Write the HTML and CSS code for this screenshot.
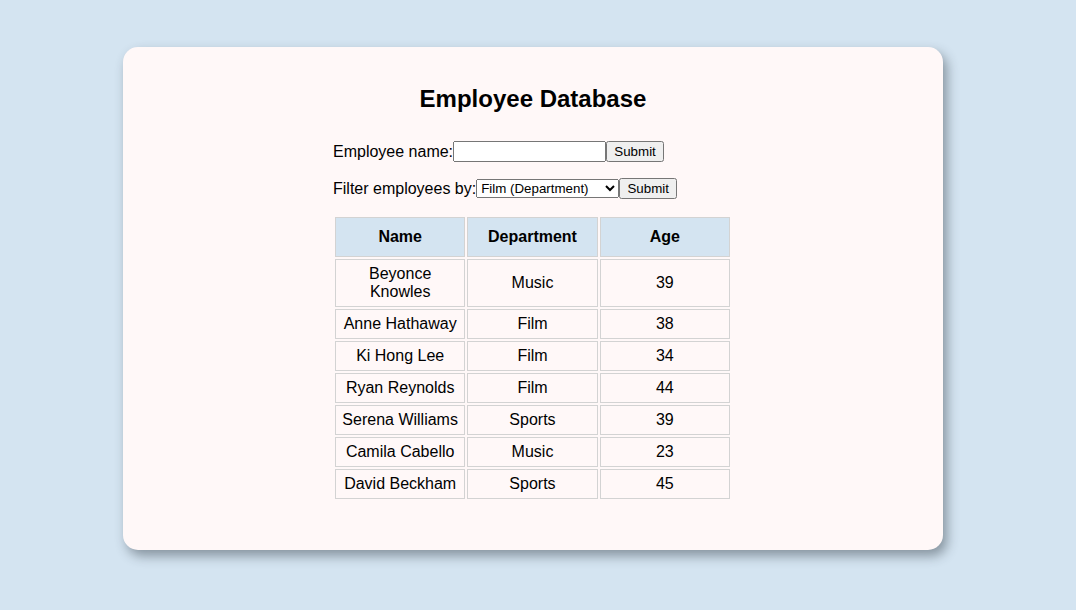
FILE: index.html
```html
<!DOCTYPE html>
<html lang="en">
  <head>
    <meta charset="utf-8">
    <title>Employee Database</title>
    <link rel="stylesheet" href="styles.css">
  </head>
  <body>
    <div id="card">
      <div id="content">
        <h2 id="page-title">Employee Database</h2>
        <form class="row">
          <label for="name">Employee name:</label><input id="name" type="text"><button type="button">Submit</button>
        </form>
        <form class="row">
          <label for="filter">Filter employees by:</label><select id="filter">
            <option>Film (Department)</option>
            <option>Music (Department)</option>
            <option>Sports (Department)</option>
          </select><button type="button">Submit</button>
        </form>
        <table id="employees">
          <thead>
            <tr><th>Name</th><th>Department</th><th>Age</th></tr>
          </thead>
          <tbody>
            <tr><td>Beyonce Knowles</td><td>Music</td><td>39</td></tr>
            <tr><td>Anne Hathaway</td><td>Film</td><td>38</td></tr>
            <tr><td>Ki Hong Lee</td><td>Film</td><td>34</td></tr>
            <tr><td>Ryan Reynolds</td><td>Film</td><td>44</td></tr>
            <tr><td>Serena Williams</td><td>Sports</td><td>39</td></tr>
            <tr><td>Camila Cabello</td><td>Music</td><td>23</td></tr>
            <tr><td>David Beckham</td><td>Sports</td><td>45</td></tr>
          </tbody>
        </table>
      </div>
    </div>
  </body>
</html>
```

FILE: styles.css
```css
:root {
  --sky: #d4e4f1;
  --snow: #fff8f8;
  --line: #d3d3d3;
}
html,
body {
  margin: 0;
  background-color: var(--sky);
}
body {
  padding: 47px 0 60px 123px;
  font-family: "Liberation Sans", Arial, sans-serif;
  font-size: 16px;
  color: #000;
}
#card {
  width: 820px;
  box-sizing: border-box;
  padding: 38px 0 49px;
  background-color: var(--snow);
  border-radius: 15px;
  box-shadow: 4px 6px 12px rgba(40, 50, 60, 0.45);
}
#content {
  width: 400px;
  margin: 0 auto;
}
#page-title {
  margin: 0 0 28px;
  font-size: 24px;
  line-height: 28px;
  text-align: center;
}
.row {
  display: flex;
  align-items: center;
  height: 21px;
  margin: 0 0 16px;
  line-height: 18px;
}
input,
select,
button {
  font-family: "Liberation Sans", Arial, sans-serif;
  font-size: 13.33px;
}
#name {
  width: 153px;
  height: 21px;
  box-sizing: border-box;
  margin: 0;
}
#filter {
  width: 143px;
  height: 19px;
  box-sizing: border-box;
  margin: 0;
}
button {
  width: 58px;
  height: 21px;
  padding: 0;
  margin: 0;
}
table {
  width: 399px;
  table-layout: fixed;
  border-collapse: separate;
  border-spacing: 2px;
}
th,
td {
  border: 1px solid var(--line);
  text-align: center;
  line-height: 18px;
}
th {
  padding: 10px 5px;
  background-color: var(--sky);
}
td {
  padding: 5px 5px;
}
```
